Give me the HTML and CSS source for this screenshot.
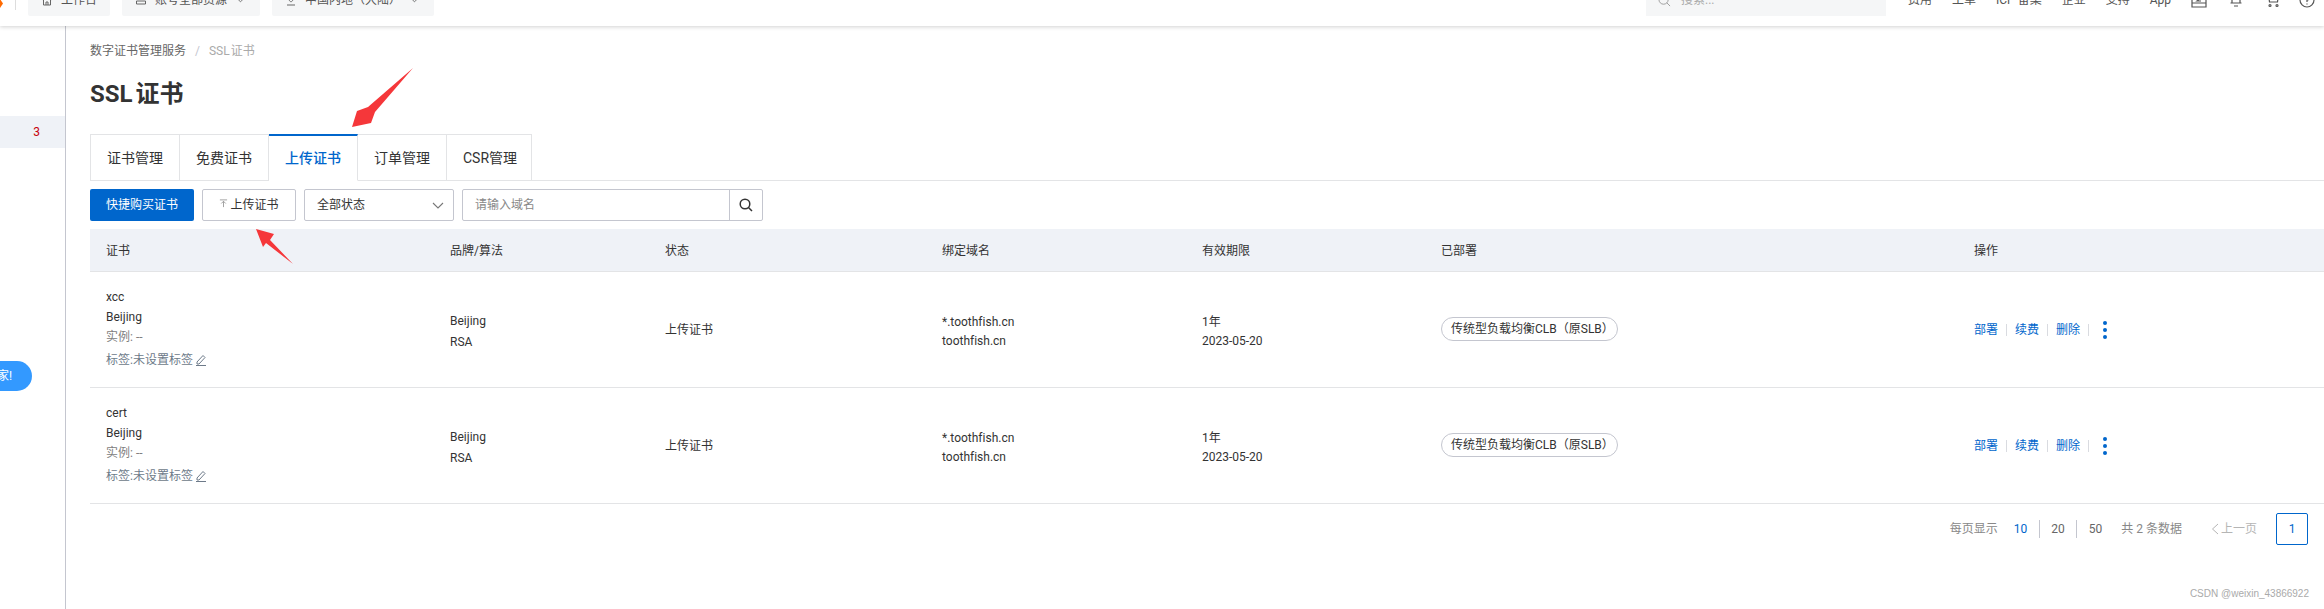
FILE: index.html
```html
<!DOCTYPE html>
<html lang="zh-CN">
<head>
<meta charset="utf-8">
<title>SSL 证书</title>
<link rel="stylesheet" href="styles.css">
</head>
<body>
<header class="topbar">
  <div class="topbar-inner">
    <div class="logo-wrap"><span class="logo"></span></div>
    <a class="nav-btn nav-home"><svg class="nav-ico" viewBox="0 0 12 12"><path d="M1 6 6 1.500 11 6M2.500 5v6h7V5M5 11V8h2v3"/></svg>工作台</a>
    <a class="nav-btn nav-res"><svg class="nav-ico" viewBox="0 0 12 12"><path d="M1.500 2h9v3h-9zM1.500 7h9v3h-9z"/></svg>账号全部资源<svg class="nav-chev" viewBox="0 0 10 6"><path d="M1 1l4 4 4-4"/></svg></a>
    <a class="nav-btn nav-region"><svg class="nav-ico" viewBox="0 0 12 12"><path d="M6 8S2.500 5.500 2.500 3a3.500 3.500 0 0 1 7 0C9.500 5.500 6 8 6 8zM2 11h8"/></svg>中国内地（大陆）<svg class="nav-chev" viewBox="0 0 10 6"><path d="M1 1l4 4 4-4"/></svg></a>
    <div class="top-search"><svg class="search-ico" viewBox="0 0 14 14"><circle cx="6" cy="6" r="5"/><path d="M9.500 9.500 13 13"/></svg>搜索...</div>
    <nav class="top-links">
      <a>费用</a><a>工单</a><a>ICP 备案</a><a>企业</a><a>支持</a><a>App</a>
    </nav>
    <div class="top-icons">
      <svg viewBox="0 0 16 16"><path d="M1 1h14v14H1zM1 11h14M6 6h4L6 9h4"/></svg>
      <svg viewBox="0 0 16 16"><path d="M4 11V6a4 4 0 0 1 8 0v5zM2.500 11h11M6 14h4"/></svg>
      <svg viewBox="0 0 16 16"><path d="M2 2h1.500l1 8h8l1-8H3.500"/><circle cx="5" cy="13.500" r="1"/><circle cx="12" cy="13.500" r="1"/></svg>
      <svg class="help" viewBox="0 0 16 16"><circle cx="8" cy="8" r="7"/><path d="M6 6a2 2 0 1 1 2 2v2M8 11.500v1"/></svg>
    </div>
  </div>
</header>

<div class="layout">
  <aside class="sidebar">
    <div class="side-item"><span class="side-count">3</span></div>
  </aside>
  <main class="content">
    <div class="breadcrumb"><a>数字证书管理服务</a><span class="bc-sep">/</span><span class="bc-cur">SSL 证书</span></div>
    <h1 class="title">SSL 证书</h1>
    <div class="tabs">
      <a class="tab">证书管理</a>
      <a class="tab">免费证书</a>
      <a class="tab tab-active">上传证书</a>
      <a class="tab">订单管理</a>
      <a class="tab tab-last">CSR管理</a>
    </div>
    <div class="toolbar">
      <button class="btn btn-primary">快捷购买证书</button>
      <button class="btn btn-upload"><svg class="up-ico" viewBox="0 0 10 10"><path d="M1 1h8M5 9V2.500M2.500 5 5 2.500 7.500 5"/></svg>上传证书</button>
      <div class="select">全部状态<svg class="select-chev" viewBox="0 0 12 7"><path d="M1 1l5 5 5-5"/></svg></div>
      <div class="search">
        <span class="search-input">请输入域名</span>
        <span class="search-btn"><svg viewBox="0 0 14 14"><circle cx="6" cy="6" r="4.800"/><path d="M9.500 9.500 13 13"/></svg></span>
      </div>
    </div>
    <table class="cert-table">
      <colgroup>
        <col class="c1"><col class="c2"><col class="c3"><col class="c4"><col class="c5"><col class="c6"><col class="c7">
      </colgroup>
      <thead>
        <tr><th>证书</th><th>品牌/算法</th><th>状态</th><th>绑定域名</th><th>有效期限</th><th>已部署</th><th>操作</th></tr>
      </thead>
      <tbody>
        <tr>
          <td><div class="ln">xcc</div><div class="ln">Beijing</div><div class="ln muted">实例: --</div><div class="ln muted tag">标签:未设置标签<svg class="pen" viewBox="0 0 12 12"><path d="M2 8 8 1.500l2 2L4 10H2zM1 11.500h10"/></svg></div></td>
          <td><div class="ln2">Beijing</div><div class="ln2">RSA</div></td>
          <td>上传证书</td>
          <td><div class="ln3">*.toothfish.cn</div><div class="ln3">toothfish.cn</div></td>
          <td><div class="ln3">1年</div><div class="ln3">2023-05-20</div></td>
          <td><span class="pill">传统型负载均衡CLB（原SLB）</span></td>
          <td><div class="actions"><a>部署</a><i></i><a>续费</a><i></i><a>删除</a><i></i><b class="more"><s></s><s></s><s></s></b></div></td>
        </tr>
        <tr>
          <td><div class="ln">cert</div><div class="ln">Beijing</div><div class="ln muted">实例: --</div><div class="ln muted tag">标签:未设置标签<svg class="pen" viewBox="0 0 12 12"><path d="M2 8 8 1.500l2 2L4 10H2zM1 11.500h10"/></svg></div></td>
          <td><div class="ln2">Beijing</div><div class="ln2">RSA</div></td>
          <td>上传证书</td>
          <td><div class="ln3">*.toothfish.cn</div><div class="ln3">toothfish.cn</div></td>
          <td><div class="ln3">1年</div><div class="ln3">2023-05-20</div></td>
          <td><span class="pill">传统型负载均衡CLB（原SLB）</span></td>
          <td><div class="actions"><a>部署</a><i></i><a>续费</a><i></i><a>删除</a><i></i><b class="more"><s></s><s></s><s></s></b></div></td>
        </tr>
      </tbody>
    </table>
    <div class="pager">
      <span class="pg-label">每页显示</span>
      <span class="pg-sizes"><a class="pg-on">10</a><i></i><a>20</a><i></i><a>50</a></span>
      <span class="pg-total">共 2 条数据</span>
      <span class="pg-prev"><svg viewBox="0 0 8 12"><path d="M7 1 1.500 6 7 11"/></svg>上一页</span>
      <span class="pg-cur">1</span>
    </div>
  </main>
</div>

<div class="float-pill">家!</div>
<div class="watermark">CSDN @weixin_43866922</div>
<svg class="annot" viewBox="0 0 2324 609">
  <polygon points="413,68 375,112 371,123 352,127 357,111 368,107"/>
  <polygon points="256,229 274,234 270,240 293,264 266,243 263,247"/>
</svg>
</body>
</html>
```

FILE: styles.css
```css
* { box-sizing: border-box; }
html, body { margin: 0; padding: 0; height: 100%; }
body {
  width: 2324px;
  height: 609px;
  overflow: hidden;
  position: relative;
  background: #fff;
  color: #333;
  font: 12px/18px Roboto, "Noto Sans CJK SC", sans-serif;
  font-variant-ligatures: none;
}
a { color: inherit; text-decoration: none; }

/* top bar */
.topbar {
  height: 26px;
  overflow: hidden;
  background: #fff;
  box-shadow: 0 1px 4px rgba(0,0,0,.18);
  position: relative;
  z-index: 2;
}
.topbar-inner {
  display: flex;
  align-items: center;
  height: 32px;
  margin-top: -16px;
  color: #555;
}
.logo-wrap {
  width: 16px;
  height: 20px;
  border-right: 1px solid #ddd;
  margin-right: 12px;
}
.logo {
  display: block;
  width: 3px;
  height: 9px;
  margin-top: 9px;
  background: #ff6a00;
  clip-path: polygon(0 0, 100% 50%, 0 100%);
}
.nav-btn {
  display: flex;
  align-items: center;
  height: 32px;
  background: #f5f6f7;
  border-radius: 2px;
  padding-left: 13px;
  margin-right: 12px;
}
.nav-home { width: 82px; }
.nav-res { width: 138px; }
.nav-region { width: 162px; margin-right: 0; }
.nav-ico { width: 12px; height: 12px; margin-right: 8px; fill: none; stroke: #666; stroke-width: 1; }
.nav-chev { width: 9px; height: 6px; margin-left: 9px; fill: none; stroke: #666; stroke-width: 1; }
.top-search {
  display: flex;
  align-items: center;
  width: 240px;
  height: 32px;
  margin-left: 1212px;
  padding-left: 12px;
  background: #f5f6f7;
  color: #aaa;
}
.search-ico { width: 13px; height: 13px; margin-right: 10px; fill: none; stroke: #999; stroke-width: 1; }
.top-links { display: flex; gap: 20px; margin-left: 22px; }
.top-icons { display: flex; align-items: center; margin-left: 20px; gap: 21px; }
.top-icons svg { width: 16px; height: 16px; fill: none; stroke: #555; stroke-width: 1.200; }
.top-icons .help { margin-left: -3px; }

/* layout */
.layout { display: flex; height: 583px; }
.sidebar {
  width: 66px;
  flex: none;
  border-right: 1px solid #c4c6cf;
  padding-top: 90px;
}
.side-item {
  height: 32px;
  background: #eff2f7;
  display: flex;
  align-items: center;
  justify-content: flex-end;
  padding-right: 25px;
}
.side-count { color: #c7000b; }
.content { flex: 1; min-width: 0; padding: 16px 0 0 24px; }

.breadcrumb { display: flex; color: #666; line-height: 18px; }
.bc-sep { margin: 0 9px; color: #c4c6cf; }
.bc-cur { color: #aaa; word-spacing: -2px; }
.title { margin: 18px 0 0; font-size: 24px; line-height: 32px; font-weight: 700; color: #333; word-spacing: -3px; }

.tabs {
  display: flex;
  height: 47px;
  margin-top: 24px;
  border-bottom: 1px solid #e3e4e6;
}
.tab {
  display: flex;
  align-items: center;
  height: 47px;
  padding: 0 16px;
  font-size: 14px;
  color: #333;
  border: 1px solid #e3e4e6;
  border-left: 0;
}
.tab:first-child { border-left: 1px solid #e3e4e6; }
.tab-last { padding-right: 14px; }
.tab-active {
  color: #06c;
  border-top: 2px solid #06c;
  border-bottom-color: #fff;
  padding-bottom: 1px;
  font-weight: 500;
}

.toolbar { display: flex; height: 32px; margin-top: 8px; }
.btn {
  height: 32px;
  font: inherit;
  border-radius: 2px;
  padding: 0;
}
.btn-primary {
  width: 104px;
  background: #06c;
  color: #fff;
  border: 0;
  margin-right: 8px;
}
.btn-upload {
  display: flex;
  align-items: center;
  justify-content: center;
  width: 94px;
  background: #fff;
  color: #333;
  border: 1px solid #c4c6cf;
  margin-right: 8px;
}
.up-ico { width: 9px; height: 9px; margin: -4px 2px 0 0; fill: none; stroke: #999; stroke-width: 1; }
.select {
  display: flex;
  align-items: center;
  justify-content: space-between;
  width: 150px;
  padding: 0 9px 0 12px;
  border: 1px solid #c4c6cf;
  border-radius: 2px;
  color: #333;
  margin-right: 8px;
}
.select-chev { width: 12px; height: 7px; fill: none; stroke: #777; stroke-width: 1.100; }
.search { display: flex; width: 301px; border: 1px solid #c4c6cf; border-radius: 2px; }
.search-input { flex: 1; padding-left: 12px; line-height: 30px; color: #888; }
.search-btn {
  display: flex;
  align-items: center;
  justify-content: center;
  width: 33px;
  border-left: 1px solid #c4c6cf;
}
.search-btn svg { width: 14px; height: 14px; fill: none; stroke: #333; stroke-width: 1.500; }

/* table */
.cert-table {
  width: 2234px;
  margin-top: 8px;
  border-collapse: collapse;
  table-layout: fixed;
}
.c1 { width: 344px; }
.c2 { width: 215px; }
.c3 { width: 277px; }
.c4 { width: 260px; }
.c5 { width: 239px; }
.c6 { width: 533px; }
.c7 { width: 366px; }
.cert-table th {
  height: 42px;
  padding: 2px 16px 0;
  text-align: left;
  font-weight: 400;
  background: #eff2f7;
  border-bottom: 1px solid #e3e4e6;
  color: #333;
}
.cert-table td {
  height: 116px;
  padding: 2px 16px 0;
  border-bottom: 1px solid #e3e4e6;
  vertical-align: middle;
  color: #333;
}
.ln { line-height: 20px; }
.ln:first-child { margin-top: -3px; }
.muted { color: #808080; }
.tag { display: flex; align-items: center; margin-top: 3px; color: #6d7a89; }
.pen { width: 12px; height: 12px; margin-left: 2px; fill: none; stroke: #6d7a89; stroke-width: 1; }
.ln2 { line-height: 21px; }
.ln2:first-child { margin-top: 3px; }
.ln3 { line-height: 18.500px; }
.ln3:first-child { margin-top: 3px; }
.pill {
  display: inline-block;
  width: 177px;
  height: 24px;
  padding: 0 9px;
  line-height: 22px;
  border: 1px solid #c4c6cf;
  border-radius: 12px;
  white-space: nowrap;
  margin-top: -2px;
}
.actions { display: flex; align-items: center; color: #06c; padding-left: 0; }
.actions i { width: 1px; height: 12px; background: #d9dbe0; margin: 0 8px; }
.more { display: flex; flex-direction: column; gap: 3px; margin-left: 6px; }
.more s { display: block; width: 4px; height: 4px; border-radius: 50%; background: #06c; }

/* pager */
.pager { display: flex; align-items: center; justify-content: flex-end; height: 32px; margin-top: 9px; padding-right: 16px; color: #888; }
.pg-sizes { display: flex; align-items: center; margin-left: 16px; color: #666; }
.pg-sizes i { width: 1px; height: 18px; background: #c4c6cf; margin: 0 11.500px; }
.pg-on { color: #06c; }
.pg-total { margin-left: 19px; }
.pg-prev { display: flex; align-items: center; margin-left: 29px; color: #b5b5b5; }
.pg-prev svg { width: 8px; height: 12px; margin-right: 2px; fill: none; stroke: #b5b5b5; stroke-width: 1; }
.pg-cur {
  width: 32px;
  height: 32px;
  margin-left: 19px;
  border: 1px solid #06c;
  border-radius: 2px;
  text-align: center;
  line-height: 30px;
  color: #06c;
}

/* overlays */
.float-pill {
  position: absolute;
  left: -12px;
  top: 361px;
  width: 44px;
  height: 30px;
  padding-left: 9px;
  border-radius: 0 15px 15px 0;
  background: #3399ff;
  color: #fff;
  line-height: 30px;
  font-size: 12px;
}
.watermark {
  position: absolute;
  right: 15px;
  top: 585px;
  color: #aaa;
  font-family: "Liberation Sans", sans-serif;
  font-size: 10px;
  line-height: 18px;
}
.annot { position: absolute; left: 0; top: 0; width: 2324px; height: 609px; pointer-events: none; z-index: 3; }
.annot polygon { fill: #f5373a; }
```
